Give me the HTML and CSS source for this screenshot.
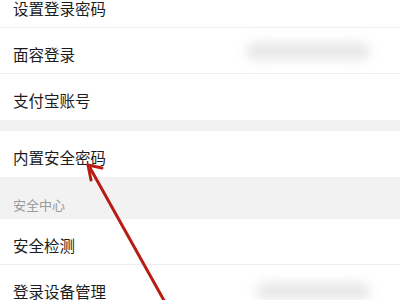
FILE: index.html
```html
<!DOCTYPE html>
<html lang="zh-CN">
<head>
    <meta charset="UTF-8">
    <meta name="viewport" content="width=device-width, initial-scale=1.0">
    <title>账号与安全</title>
    <link rel="stylesheet" href="styles.css">
</head>
<body>
    <div class="page">
        <div class="group first">
            <div class="row">设置登录密码</div>
            <div class="row">面容登录<span class="value"></span></div>
            <div class="row">支付宝账号</div>
        </div>
        <div class="group">
            <div class="row">内置安全密码</div>
        </div>
        <div class="section-title">安全中心</div>
        <div class="group">
            <div class="row">安全检测</div>
            <div class="row">登录设备管理<span class="value short"></span></div>
        </div>

        <!-- 标注箭头 -->
        <svg class="arrow" width="400" height="300" viewBox="0 0 400 300">
            <line x1="166" y1="304" x2="89" y2="166" />
            <polyline points="102,168 88,165 91,180" />
        </svg>
    </div>
</body>
</html>
```

FILE: styles.css
```css
body {
    font-family: 'Noto Sans CJK SC', 'Noto Sans', sans-serif;
    background-color: #f2f2f2;
    margin: 0;
    padding: 0;
    overflow: hidden;
}

.page {
    position: relative;
    width: 400px;
    height: 300px;
    overflow: hidden;
}

.group {
    background-color: #fff;
}

.group.first {
    margin-top: -18px;
    margin-bottom: 11px;
}

.row {
    display: flex;
    align-items: center;
    box-sizing: border-box;
    height: 46px;
    padding: 6px 0 0 13px;
    font-size: 15.5px;
    color: #1c1c1c;
    border-bottom: 1px solid #ededed;
}

.group .row:last-child {
    border-bottom: none;
}

.value {
    margin-left: auto;
    margin-right: 30px;
    width: 124px;
    height: 16px;
    margin-top: -6px;
    background-color: #e6e6e6;
    border-radius: 8px;
    filter: blur(6px);
}

.value.short {
    width: 114px;
    margin-top: 0;
}

.section-title {
    box-sizing: border-box;
    height: 42px;
    padding: 12px 0 0 13px;
    display: flex;
    align-items: center;
    font-size: 13px;
    color: #9a9a9a;
}

.arrow {
    position: absolute;
    left: 0;
    top: 0;
}

.arrow line,
.arrow polyline {
    stroke: #b81c12;
    stroke-width: 3;
    fill: none;
    stroke-linecap: round;
    stroke-linejoin: round;
}
```
